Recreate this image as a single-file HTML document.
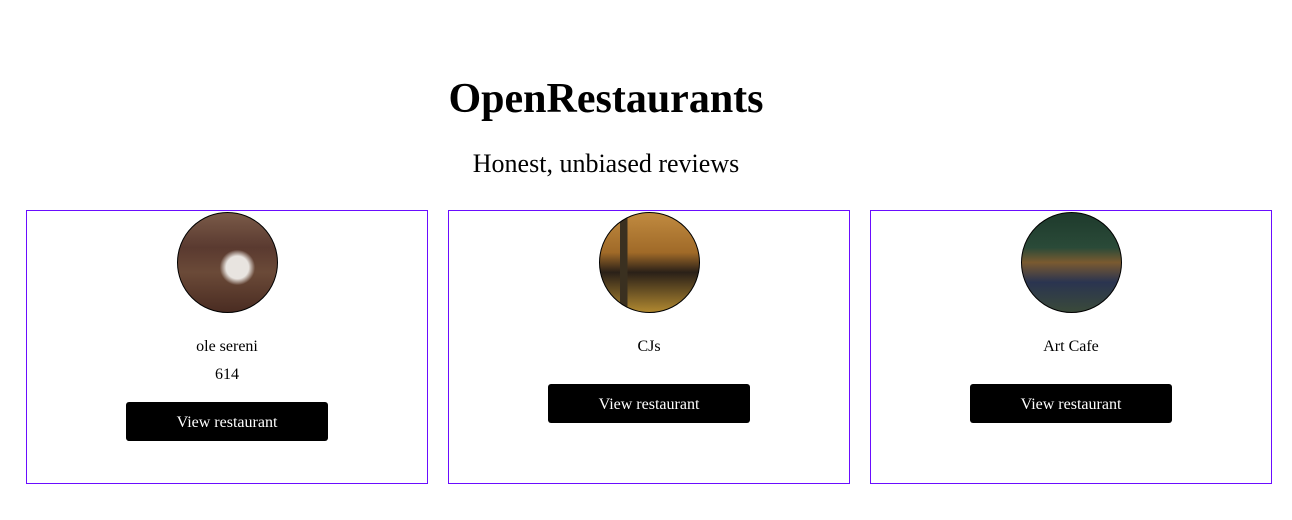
<!DOCTYPE html>
<html><head><style>
body{margin:0;width:1292px;height:520px;background:#fff;font-family:"Liberation Serif",serif;color:#000;position:relative;overflow:hidden}
h1{position:absolute;left:0;width:1212px;top:74px;margin:0;text-align:center;font-size:42px;font-weight:bold;line-height:50px}
.sub{position:absolute;left:0;width:1212px;top:149px;text-align:center;font-size:26px;line-height:30px}
.card{position:absolute;top:210px;width:400px;height:272px;border:1px solid #6a0dff}
.img{position:absolute;left:150px;top:1px;width:99px;height:99px;border-radius:50%;border:1px solid #000}
.name{position:absolute;left:0;width:100%;top:126px;text-align:center;font-size:16px;line-height:20px}
.num{position:absolute;left:0;width:100%;top:154px;text-align:center;font-size:16px;line-height:20px}
.btn{position:absolute;left:99px;width:202px;height:39px;background:#000;color:#fff;border-radius:3px;text-align:center;line-height:41px;font-size:16px}
</style></head><body>
<h1>OpenRestaurants</h1>
<div class="sub">Honest, unbiased reviews</div>
<div class="card" style="left:26px">
<div class="img" style="background:radial-gradient(circle at 60% 55%,#e8e4e0 0 14%,transparent 22%),linear-gradient(180deg,#7a5a48 0%,#5a3a30 35%,#6b4a38 60%,#4a2c22 100%)"></div>
<div class="name">ole sereni</div><div class="num">614</div>
<div class="btn" style="top:191px">View restaurant</div></div>
<div class="card" style="left:448px">
<div class="img" style="background:linear-gradient(90deg,transparent 20%,#3a3020 20% 28%,transparent 28%),linear-gradient(180deg,#c08a40 0%,#a06a28 40%,#2a2018 60%,#b08830 100%)"></div>
<div class="name">CJs</div>
<div class="btn" style="top:173px">View restaurant</div></div>
<div class="card" style="left:870px">
<div class="img" style="background:linear-gradient(180deg,#1e3a2c 0%,#2a4a38 35%,#7a5a30 50%,#2a3450 70%,#3a4a3a 100%)"></div>
<div class="name">Art Cafe</div>
<div class="btn" style="top:173px">View restaurant</div></div>
</body></html>
